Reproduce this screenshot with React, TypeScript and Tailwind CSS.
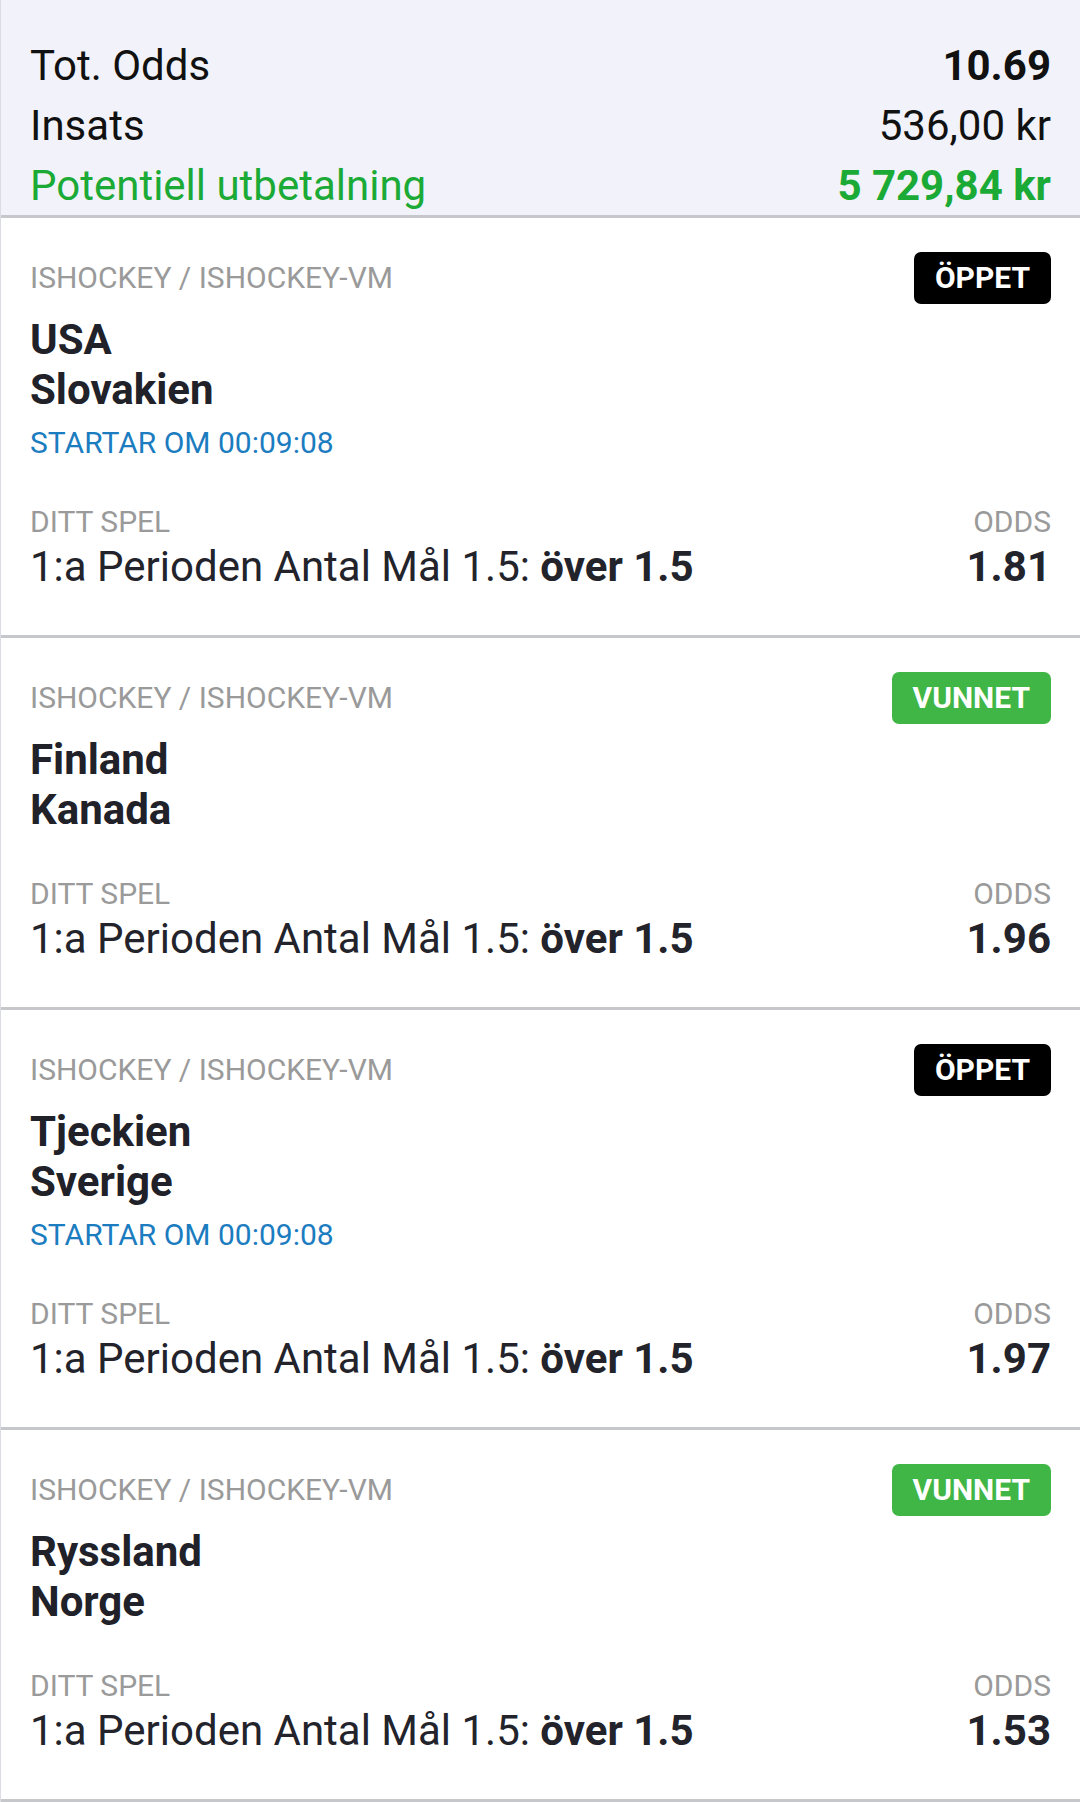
import React from "react";

type Bet = {
  home: string;
  away: string;
  status: "open" | "won";
  starts?: string;
  odds: string;
};

const bets: Bet[] = [
  { home: "USA", away: "Slovakien", status: "open", starts: "STARTAR OM 00:09:08", odds: "1.81" },
  { home: "Finland", away: "Kanada", status: "won", odds: "1.96" },
  { home: "Tjeckien", away: "Sverige", status: "open", starts: "STARTAR OM 00:09:08", odds: "1.97" },
  { home: "Ryssland", away: "Norge", status: "won", odds: "1.53" },
];

function Badge({ status }: { status: Bet["status"] }) {
  if (status === "open") {
    return (
      <div className="h-[52px] px-[21px] rounded-[7px] bg-black text-white font-bold text-[30px] leading-[52px]">
        ÖPPET
      </div>
    );
  }
  return (
    <div className="h-[52px] px-[21px] rounded-[7px] bg-[#3fb645] text-white font-bold text-[30px] leading-[52px]">
      VUNNET
    </div>
  );
}

function BetCard({ bet }: { bet: Bet }) {
  return (
    <div className="bg-white border-b-[3px] border-[#c6c7cb] pt-[34px] pb-[43px] pl-[29px] pr-[29px]">
      <div className="flex items-center justify-between h-[52px]">
        <div className="text-[30px] leading-[40px] text-[#9a9a9a]">ISHOCKEY / ISHOCKEY-VM</div>
        <Badge status={bet.status} />
      </div>
      <div className="mt-[11px] font-bold text-[42px] leading-[50px] text-[#202129]">
        <div>{bet.home}</div>
        <div>{bet.away}</div>
      </div>
      {bet.starts && (
        <div className="mt-[8px] text-[30px] leading-[40px] text-[#1b7cbf]">{bet.starts}</div>
      )}
      <div className="mt-[39px] flex justify-between items-end">
        <div>
          <div className="text-[30px] leading-[40px] text-[#9a9a9a]">DITT SPEL</div>
          <div className="text-[42px] leading-[50px] text-[#22232b]">
            1:a Perioden Antal Mål 1.5: <span className="font-bold">över 1.5</span>
          </div>
        </div>
        <div className="text-right">
          <div className="text-[30px] leading-[40px] text-[#9a9a9a]">ODDS</div>
          <div className="text-[42px] leading-[50px] font-bold text-[#22232b]">{bet.odds}</div>
        </div>
      </div>
    </div>
  );
}

export default function App() {
  return (
    <div
      className="w-[1080px] h-[1802px] overflow-hidden bg-white border-l border-[#dcdde2]"
      style={{ fontFamily: "Roboto, 'Noto Sans', sans-serif" }}
    >
      <div className="bg-[#f2f3fa] border-b-[3px] border-[#c6c7cb] pt-[35px] pl-[29px] pr-[29px]">
        <div className="flex justify-between h-[60px] items-center text-[42px] text-[#111111]">
          <span>Tot. Odds</span>
          <span className="font-bold">10.69</span>
        </div>
        <div className="flex justify-between h-[60px] items-center text-[42px] text-[#111111]">
          <span>Insats</span>
          <span>536,00 kr</span>
        </div>
        <div className="flex justify-between h-[60px] items-center text-[42px] text-[#1caa37]">
          <span>Potentiell utbetalning</span>
          <span className="font-bold">5 729,84 kr</span>
        </div>
      </div>
      {bets.map((b, i) => (
        <BetCard key={i} bet={b} />
      ))}
    </div>
  );
}
